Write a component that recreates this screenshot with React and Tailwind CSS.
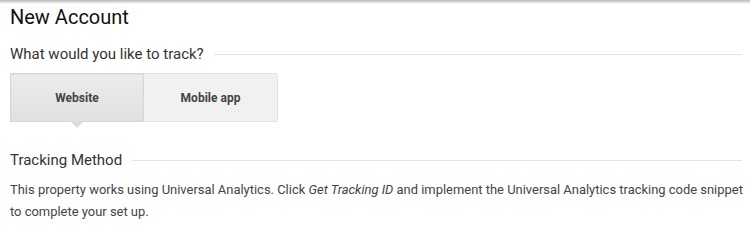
export default function App() {
  return (
    <div className="relative h-[235px] w-[750px] overflow-hidden bg-white font-['Roboto',sans-serif] text-[#222]">
      <div className="absolute inset-x-0 top-0 h-[4px] bg-gradient-to-b from-[#b8b8b8] to-white" />
      <div className="pl-[10px] pr-[8px] pt-[4px]">
        <h1 className="text-[20px] leading-[26px] text-[#111]">New Account</h1>

        <div className="mt-[14px] flex items-center gap-[10px]">
          <h2 className="text-[15px] leading-[20px] text-[#333]">What would you like to track?</h2>
          <div className="h-px flex-1 bg-[#e4e4e4]" />
        </div>

        <div className="mt-[9px] flex">
          <div className="relative flex h-[49px] w-[134px] items-center justify-center border border-[#d6d6d6] bg-gradient-to-b from-[#ececec] to-[#e0e0e0] text-[12px] font-bold text-[#444] shadow-[inset_0_1px_2px_rgba(0,0,0,0.06)]">
            Website
            <span className="absolute -bottom-[7px] left-1/2 h-0 w-0 -translate-x-1/2 border-x-[7px] border-t-[7px] border-x-transparent border-t-[#dcdcdc]" />
          </div>
          <div className="flex h-[49px] w-[134px] items-center justify-center rounded-r-[2px] border border-l-0 border-[#e2e2e2] bg-[#f1f1f1] text-[12px] font-bold text-[#444]">
            Mobile app
          </div>
        </div>

        <div className="mt-[28px] flex items-center gap-[10px]">
          <h2 className="text-[15px] leading-[20px] text-[#333]">Tracking Method</h2>
          <div className="h-px flex-1 bg-[#e4e4e4]" />
        </div>

        <p className="-mr-[4px] mt-[9px] text-[12.95px] leading-[22px] text-[#444]">
          This property works using Universal Analytics. Click <i>Get Tracking ID</i> and implement the Universal Analytics tracking code snippet to complete your set up.
        </p>
      </div>
    </div>
  );
}
